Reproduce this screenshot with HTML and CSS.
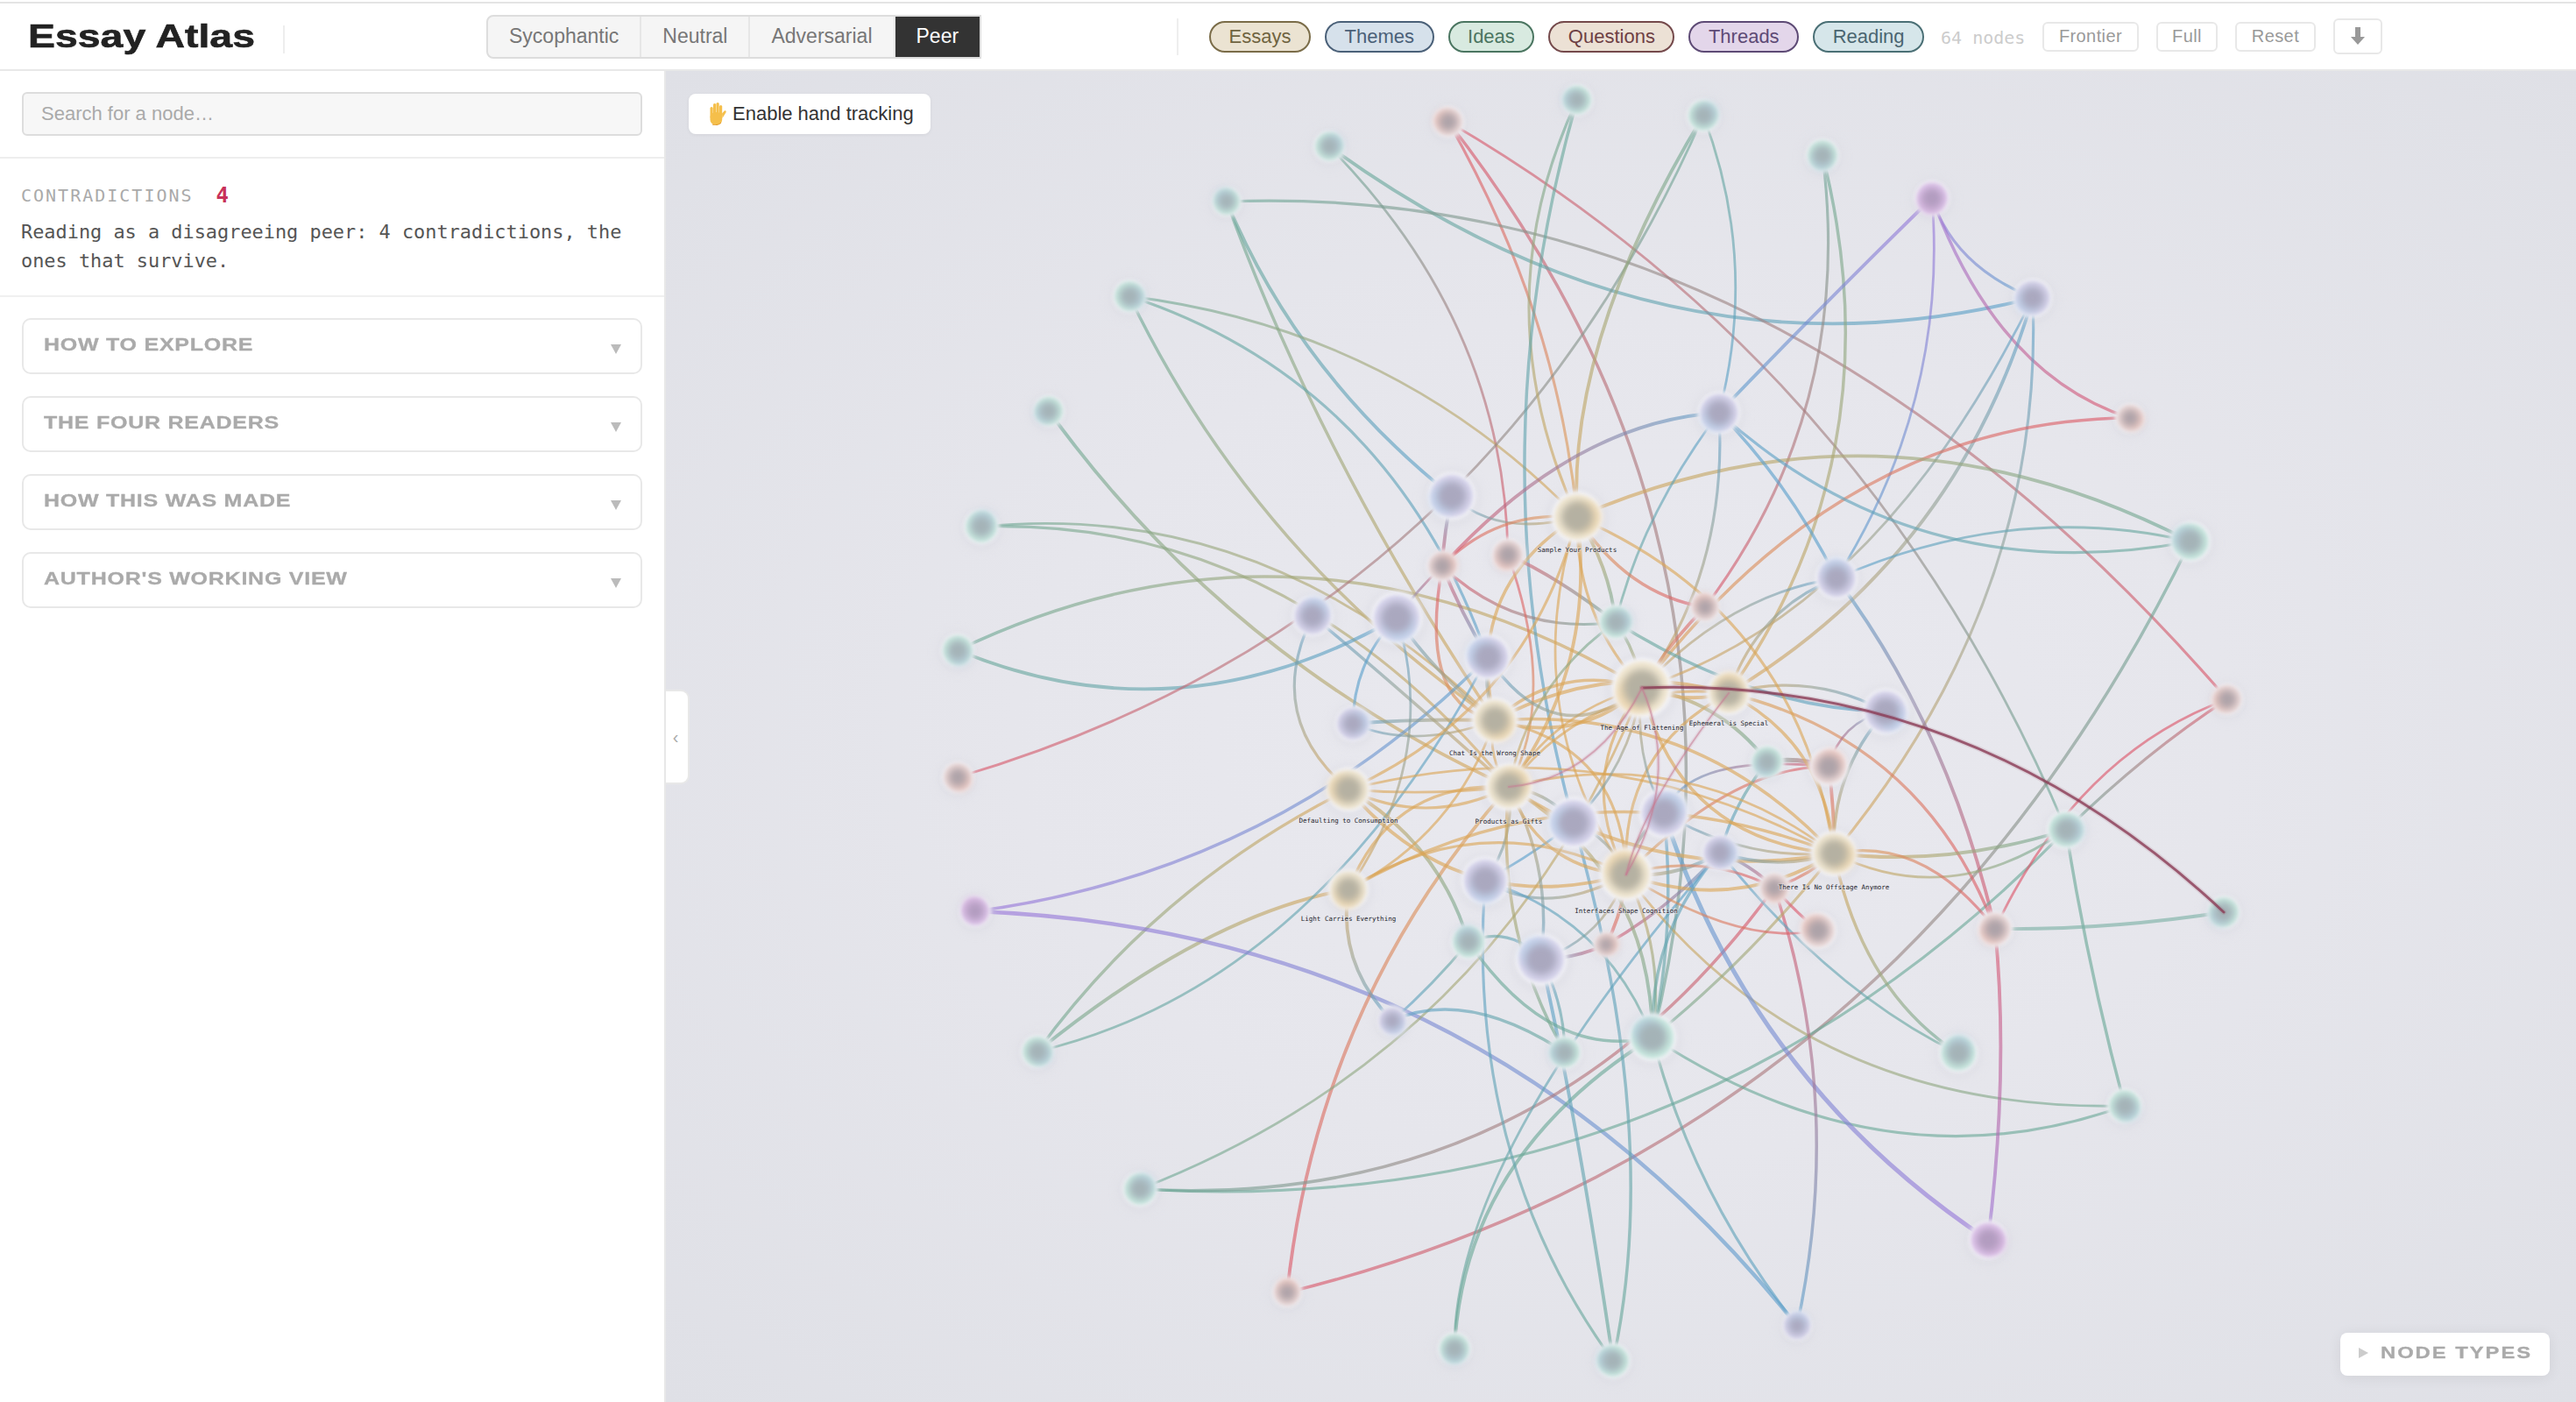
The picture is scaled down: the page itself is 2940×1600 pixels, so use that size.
FILE: index.html
```html
<!DOCTYPE html>
<html lang="en">
<head>
    <meta charset="UTF-8">
    <meta name="viewport" content="width=device-width, initial-scale=1.0">
    <title>Essay Atlas</title>
    <link rel="stylesheet" href="styles.css">
</head>

<body>

<header class="topbar">
    <div class="logo"><span>Essay Atlas</span></div>
    <div class="logo-divider"></div>

    <div class="readers">
        <button class="reader">Sycophantic</button>
        <button class="reader">Neutral</button>
        <button class="reader">Adversarial</button>
        <button class="reader active">Peer</button>
    </div>

    <div class="legend-divider"></div>

    <div class="legend">
        <span class="pill pill-essays">Essays</span>
        <span class="pill pill-themes">Themes</span>
        <span class="pill pill-ideas">Ideas</span>
        <span class="pill pill-questions">Questions</span>
        <span class="pill pill-threads">Threads</span>
        <span class="pill pill-reading">Reading</span>
    </div>

    <span class="node-count">64 nodes</span>

    <div class="tools">
        <button class="tool">Frontier</button>
        <button class="tool">Full</button>
        <button class="tool">Reset</button>
        <button class="tool tool-icon" aria-label="Download">
            <svg width="16" height="20" viewBox="0 0 16 20"><path d="M5 0h6v11h5l-8 9-8-9h5z" fill="#999"/></svg>
        </button>
    </div>
</header>

<div class="layout">
    <aside class="sidebar">
        <div class="search-box">
            <input class="search" type="text" placeholder="Search for a node…">
        </div>

        <div class="summary">
            <div class="summary-head">
                <span class="summary-label">CONTRADICTIONS</span>
                <span class="summary-count">4</span>
            </div>
            <p class="summary-text">Reading as a disagreeing peer: 4 contradictions, the ones that survive.</p>
        </div>

        <div class="panels">
            <div class="panel"><span class="panel-title">How to explore</span><i class="panel-arrow"></i></div>
            <div class="panel"><span class="panel-title">The four readers</span><i class="panel-arrow"></i></div>
            <div class="panel"><span class="panel-title">How this was made</span><i class="panel-arrow"></i></div>
            <div class="panel"><span class="panel-title">Author's working view</span><i class="panel-arrow"></i></div>
        </div>
    </aside>

    <main class="canvas">
        <svg id="graph" class="graph" viewBox="760 81 2180 1519" xmlns="http://www.w3.org/2000/svg"></svg>

        <button class="collapse-tab">‹</button>

        <button class="hand-btn">
            <svg width="24" height="26" viewBox="0 0 24 26">
                <g fill="#f5bf4b">
                    <rect x="5.5" y="5" width="3.2" height="13" rx="1.6"/>
                    <rect x="9" y="1" width="3.2" height="15" rx="1.6"/>
                    <rect x="12.5" y="0" width="3.2" height="15" rx="1.6"/>
                    <rect x="16" y="3" width="3.2" height="13" rx="1.6"/>
                    <rect x="5.5" y="11" width="13.7" height="14.5" rx="6"/>
                    <path d="M19 12.500l2.500-2.800c1.300-1.200 2.900.2 1.900 1.700l-4 6.500z"/>
                </g>
                <path d="M8 25c3 1 7 1 10-2" stroke="#e09a2e" stroke-width="1" fill="none"/>
            </svg>
            Enable hand tracking
        </button>

        <div class="node-types"><i class="node-types-arrow"></i><span class="node-types-title">Node types</span></div>
    </main>
</div>

<script src="graph.js"></script>
</body>
</html>
```

FILE: styles.css
```css
* {
    box-sizing: border-box;
}

html, body {
    margin: 0;
    padding: 0;
    height: 100%;
}

body {
    width: 2940px;
    height: 1600px;
    overflow: hidden;
    padding-top: 2px;
    background-color: white;
    font-family: "Liberation Sans", Arial, sans-serif;
    color: #333;
}

button {
    font-family: inherit;
    cursor: pointer;
}

/* Top bar */
.topbar {
    height: 79px;
    display: flex;
    align-items: center;
    padding-left: 32px;
    border-top: 2px solid #e4e4e4;
    border-bottom: 2px solid #e8e8e8;
}

.logo {
    width: 258px;
    height: 46px;
    margin-top: 1px;
}

.logo span {
    display: inline-block;
    font-size: 37px;
    line-height: 46px;
    font-weight: bold;
    color: #222;
    white-space: nowrap;
    -webkit-text-stroke: 0.6px #222;
    transform: scaleX(1.255);
    transform-origin: left center;
}

.logo-divider {
    width: 2px;
    height: 32px;
    margin-left: 33px;
    margin-top: 6px;
    background-color: #eee;
}

.readers {
    display: flex;
    height: 50px;
    margin-left: 230px;
    border: 2px solid #ddd;
    border-radius: 8px 0 0 8px;
    background-color: #f5f5f5;
    overflow: hidden;
}

.reader {
    padding: 0 24px;
    border: none;
    border-right: 2px solid #e6e6e6;
    background: none;
    font-size: 23px;
    color: #777;
}

.reader.active {
    padding: 0 24px;
    border-right: none;
    background-color: #333;
    color: white;
}

.legend-divider {
    width: 2px;
    height: 42px;
    margin-left: 223px;
    background-color: #eee;
}

.legend {
    display: flex;
    gap: 16px;
    margin-left: 35px;
}

.pill {
    height: 36px;
    padding: 0 20.5px;
    border: 2px solid;
    border-radius: 18px;
    font-size: 22px;
    line-height: 32px;
}

.pill-essays { background-color: #ebe3d2; border-color: #7a6c48; color: #6f6340; }
.pill-themes { background-color: #d6e1eb; border-color: #4a6078; color: #4a6078; }
.pill-ideas { background-color: #d8eae0; border-color: #4a7560; color: #4a7560; }
.pill-questions { background-color: #ece1d5; border-color: #74494b; color: #6e4044; }
.pill-threads { background-color: #e3d6ea; border-color: #5d4a75; color: #5d4a75; }
.pill-reading { background-color: #d6e6ea; border-color: #4a6f75; color: #4a6570; }

.node-count {
    margin-left: 19px;
    margin-top: 3px;
    font-family: "DejaVu Sans Mono", monospace;
    font-size: 20px;
    color: #ccc;
}

.tools {
    display: flex;
    align-items: center;
    gap: 20px;
    margin-left: 20px;
}

.tool {
    height: 34px;
    padding: 0 16.5px;
    border: 2px solid #e8e8e8;
    border-radius: 6px;
    background-color: white;
    font-size: 20px;
    letter-spacing: 0.4px;
    color: #999;
}

.tool-icon {
    width: 56px;
    height: 41px;
    padding: 4px 0 0;
}

/* Sidebar and canvas */
.layout {
    display: flex;
    height: 1519px;
}

.sidebar {
    width: 760px;
    flex-shrink: 0;
    border-right: 2px solid #e8e8e8;
    background-color: white;
}

.search-box {
    height: 100px;
    padding: 24px 25px 0 25px;
    border-bottom: 2px solid #eee;
}

.search {
    display: block;
    width: 708px;
    height: 50px;
    padding: 0 20px;
    border: 2px solid #ddd;
    border-radius: 6px;
    background-color: #f7f7f7;
    font-family: inherit;
    font-size: 22px;
    outline: none;
}

.search::placeholder {
    color: #aaa;
}

.summary {
    height: 158px;
    padding: 28px 24px 0 24px;
    border-bottom: 2px solid #f0f0f0;
    font-family: "DejaVu Sans Mono", monospace;
}

.summary-head {
    display: flex;
    align-items: center;
    gap: 26px;
    height: 28px;
}

.summary-label {
    font-size: 20px;
    letter-spacing: 2px;
    color: #aaa;
}

.summary-count {
    font-size: 24px;
    font-weight: bold;
    color: #c8315a;
}

.summary-text {
    margin: 11px 0 0 0;
    font-size: 21.9px;
    line-height: 33px;
    color: #555;
}

.panels {
    display: flex;
    flex-direction: column;
    gap: 25px;
    padding: 24px 25px;
}

.panel {
    position: relative;
    width: 708px;
    height: 64px;
    padding: 17px 23px 0 23px;
    border: 2px solid #e8e8e8;
    border-radius: 10px;
}

.panel-title {
    display: inline-block;
    font-size: 20px;
    line-height: 23px;
    font-weight: bold;
    letter-spacing: 0.6px;
    text-transform: uppercase;
    white-space: nowrap;
    color: #aaa;
    -webkit-text-stroke: 0.3px #aaa;
    transform: scaleX(1.25);
    transform-origin: left center;
}

.panel-arrow {
    position: absolute;
    right: 22px;
    top: 28px;
    border-left: 6px solid transparent;
    border-right: 6px solid transparent;
    border-top: 11px solid #bbb;
}

.canvas {
    position: relative;
    flex: 1;
    overflow: hidden;
    background: radial-gradient(ellipse at 50% 50%, #e9e9ef 0%, #e6e6ec 45%, #dfe0e6 100%);
}

.graph {
    position: absolute;
    left: 0;
    top: 0;
    width: 2180px;
    height: 1519px;
}

.edge {
    fill: none;
    stroke-opacity: 0.62;
    stroke-linecap: round;
}

.contradiction {
    fill: none;
    stroke-linecap: round;
}

.node-label {
    font-family: "DejaVu Sans Mono", monospace;
    font-size: 7.5px;
    text-anchor: middle;
    fill: #24242c;
    paint-order: stroke;
    stroke: rgba(232, 232, 238, 0.65);
    stroke-width: 1.5px;
}

.collapse-tab {
    position: absolute;
    left: 0;
    top: 706px;
    width: 27px;
    height: 108px;
    padding: 0 3px 0 0;
    border: 2px solid #e8e8e8;
    border-left: none;
    border-radius: 0 10px 10px 0;
    background-color: white;
    font-size: 20px;
    color: #aaa;
}

.hand-btn {
    position: absolute;
    left: 26px;
    top: 26px;
    display: flex;
    align-items: center;
    gap: 7px;
    width: 276px;
    height: 46px;
    padding: 0 0 0 19px;
    border: none;
    border-radius: 8px;
    background-color: white;
    box-shadow: 0 1px 4px rgba(0, 0, 0, 0.06);
    font-size: 22px;
    color: #333;
}

.node-types {
    position: absolute;
    left: 1911px;
    top: 1440px;
    display: flex;
    align-items: center;
    width: 239px;
    height: 49px;
    padding-left: 21px;
    padding-bottom: 4px;
    border-radius: 8px;
    background-color: white;
    box-shadow: 0 2px 16px rgba(0, 0, 0, 0.07);
}

.node-types-arrow {
    border-top: 6px solid transparent;
    border-bottom: 6px solid transparent;
    border-left: 11px solid #ccc;
}

.node-types-title {
    display: inline-block;
    margin-left: 14px;
    font-size: 19px;
    font-weight: bold;
    letter-spacing: 1.6px;
    text-transform: uppercase;
    white-space: nowrap;
    color: #aaa;
    -webkit-text-stroke: 0.3px #aaa;
    transform: scaleX(1.25);
    transform-origin: left center;
}
```

FILE: graph.js
```javascript
// Graph data: id -> [x, y, radius]. First letter of the id is the node type.
const nodes = {
    e1: [1800, 590, 28], e2: [1874, 785, 33], e3: [1973, 791, 24], e4: [1706, 822, 25], e5: [1539, 901, 24],
    e6: [1722, 898, 26], e7: [1539, 1015, 22], e8: [1856, 998, 29], e9: [2093, 974, 25],

    t1: [1657, 566, 26], t2: [1498, 703, 22], t3: [1594, 705, 28], t4: [1698, 750, 25], t5: [1544, 826, 19],
    t6: [1962, 471, 23], t7: [2096, 660, 23], t8: [2152, 812, 25], t9: [1796, 939, 28], t10: [1899, 928, 27],
    t11: [1695, 1005, 26], t12: [1759, 1095, 28], t13: [1963, 973, 20], t14: [2320, 340, 21],
    t15: [2051, 1513, 16], t16: [1589, 1165, 16],

    q1: [1653, 139, 17], q3: [1646, 646, 17], q4: [1721, 633, 18], q5: [1946, 693, 16], q6: [2431, 477, 16],
    q7: [2542, 798, 17], q8: [2087, 875, 21], q9: [2025, 1013, 17], q10: [2075, 1062, 20], q11: [1833, 1078, 14],
    q12: [2277, 1060, 19], q13: [1469, 1475, 16], q14: [1093, 887, 17],

    i1: [1800, 114, 17], i2: [1944, 132, 18], i3: [2080, 177, 18], i4: [1400, 230, 16], i5: [1289, 338, 18],
    i6: [1197, 469, 17], i7: [1120, 601, 19], i8: [1093, 742, 18], i9: [2500, 618, 22], i10: [1844, 710, 19],
    i11: [2017, 869, 18], i12: [1676, 1075, 19], i13: [1184, 1200, 18], i14: [1786, 1201, 18], i15: [1301, 1357, 19],
    i16: [1660, 1539, 18], i17: [1886, 1184, 26], i18: [2358, 947, 21], i19: [2538, 1041, 18], i20: [2235, 1202, 21],
    i21: [2425, 1262, 19], i22: [1841, 1553, 19], i23: [1517, 167, 17],

    p1: [2205, 226, 19], p2: [1113, 1040, 17], p3: [2269, 1415, 21]
};

const labels = {
    e1: ['Sample Your Products', 630], e2: ['The Age of Flattening', 833], e3: ['Ephemeral is Special', 828],
    e4: ['Chat Is the Wrong Shape', 862], e5: ['Defaulting to Consumption', 939], e6: ['Products as Gifts', 940],
    e7: ['Light Carries Everything', 1051], e8: ['Interfaces Shape Cognition', 1042], e9: ['There Is No Offstage Anymore', 1015]
};

const edgeColors = { e: '#dba555', t: '#5a9fcb', q: '#dc5468', i: '#6aa897', p: '#9a74da' };

const nodeColors = {
    e: { rim: '#f4ead4', core: '#b5b1a2', accent: '#efd9b4' },
    t: { rim: '#d8d6ee', core: '#aaa8bf', accent: '#c2d6ee' },
    q: { rim: '#f2dedc', core: '#ada3a9', accent: '#eec8c0' },
    i: { rim: '#c9ebe1', core: '#a4b3b7', accent: '#b8d2df' },
    p: { rim: '#e2c8ee', core: '#b29cc0', accent: '#d8b8e0' }
};

// A few edges stand out from the rest, in weight or in tint.
const heavyEdges = { 'p3-t10': 5, 'p2-t15': 4.4, 'q8-i11': 5 };
const tintedEdges = { 'i19-q12': '#7ab0a4' };

// Edges: [from, to, x, y] run through the point (x, y); [from, to, bend] bulge by a share of their length.
const edges = [
    ['q1', 'i18', 2071, 482], ['q1', 'e1', 1752, 361], ['q1', 'i17', 1898, 640],
    ['i23', 't14', 1910, 350], ['i23', 'q4', 1668, 385],
    ['i4', 'q7', 2000, 360], ['i4', 'e4', 1530, 525], ['i4', 't1', 1505, 412],
    ['i5', 'e1', 1568, 420], ['i5', 't4', 1540, 490], ['i5', 'e4', 1464, 606],
    ['i6', 'e6', 1430, 717],
    ['i7', 'e4', 1430, 640], ['i7', 'e6', 1445, 670],
    ['i8', 'e2', 1484, 659], ['i8', 't3', 1344, 785],
    ['q14', 'i2', 1605, 610],
    ['i1', 'e1', 1745, 350], ['i1', 't9', 1740, 525],
    ['i2', 'e1', 1830, 375], ['i2', 't6', 1980, 300],
    ['i3', 'q5', 2065, 450], ['i3', 'e3', 2096, 500],
    ['p1', 't6', 2085, 345], ['p1', 't7', 2187, 450], ['p1', 't14', 2246, 293], ['p1', 'q6', 2299, 390],
    ['t14', 'e3', 2190, 600], ['t14', 'e2', 2120, 630], ['t14', 'e9', 2270, 670],
    ['q6', 'e2', 2130, 555],
    ['i9', 'e1', 2150, 521], ['i9', 't7', 2298, 605], ['i9', 't6', 2210, 610], ['i9', 'q13', 2075, 1175],
    ['t6', 'q3', 1800, 520], ['t6', 'i10', 1888, 590], ['t6', 'e2', 1945, 640], ['t6', 't7', 2035, 558],
    ['t7', 'q12', 2205, 845], ['t7', 'e2', 1980, 700], ['t7', 'e3', 2020, 710],
    ['i10', 't8', 2000, 785], ['q4', 'i10', 1780, 665], ['t1', 'e1', 1719, 596],
    ['q3', 'e1', 1715, 600], ['q3', 'e4', 1647, 770], ['q3', 't4', 0.02], ['q3', 't3', 0.02], ['q3', 'i10', 0.12],
    ['i13', 'e5', 1342, 1030], ['i13', 'e7', 1370, 1075], ['i13', 't4', 1470, 1050],
    ['p2', 't15', 1636, 1169], ['p2', 't4', 1430, 945],
    ['q13', 'e6', 1550, 1165],
    ['i15', 'e2', 1650, 1134], ['i15', 'i18', 1877, 1273], ['i15', 'q9', 1710, 1284],
    ['i16', 'i17', 1722, 1340], ['i16', 't13', 1735, 1290],
    ['i22', 't11', 1720, 1300], ['i22', 't9', 1858, 1270], ['i22', 't12', 1800, 1300],
    ['i21', 'e8', 2100, 1200], ['i21', 'i17', 2155, 1291], ['i21', 'i18', 2387, 1104],
    ['p3', 'q12', 2283, 1230], ['p3', 't10', 2042, 1204],
    ['t15', 'i17', 1950, 1355], ['t15', 'q9', 2072, 1260],
    ['i19', 'q12', 2407, 1056], ['q12', 'q7', 2390, 895], ['i18', 'q7', 2450, 865],
    ['e3', 'q12', 2160, 885],
    ['e9', 'i18', 2225, 975], ['e9', 'i18', 2225, 1000], ['e9', 'q12', 2190, 985], ['e9', 'i20', 2145, 1110],
    ['e9', 'q8', 2092, 925], ['t13', 'i20', 2095, 1110],
    ['i17', 'e9', 1995, 1085], ['i17', 't10', 0.04], ['e5', 'i12', 1625, 975],
    ['e5', 'e6', 1630, 904], ['e5', 'e6', 1630, 922],
    ['t16', 'i14', 1680, 1155], ['t16', 'e7', 1545, 1095], ['t16', 'i12', 0.02],
    ['i12', 't12', 1720, 1070], ['i12', 'i17', 1775, 1170], ['t12', 'q11', 0.05],
    ['t11', 't9', 0.02], ['t11', 'e8', 1770, 1025],
    ['q11', 't13', 0.04], ['q11', 'e8', 0.05],
    ['q10', 'e8', 1975, 1055], ['q9', 'q10', 0.02], ['q9', 't13', 0.05],
    ['q8', 'i11', 0.06], ['q8', 't10', 1960, 880], ['q8', 'e8', 1975, 905],
    ['i11', 't13', 0.05], ['i11', 'e2', 0.1], ['t8', 'q8', 0.15], ['t8', 'e3', 0.1],
    ['q5', 'e1', 1865, 660], ['q5', 'e2', 0.03], ['q4', 'e6', 1750, 780],

    // the dense middle of the map
    ['e1', 'e2', 0.1], ['e1', 'e4', 0.18], ['e1', 'e6', -0.1], ['e1', 'e8', 0.12], ['e1', 'e9', -0.14],
    ['e2', 'e4', 0.14], ['e2', 'e4', -0.14], ['e2', 'e6', 0.1], ['e2', 'e8', 0.16], ['e2', 'e9', 0.18], ['e2', 'e3', 0.08],
    ['e3', 'e6', 0.14], ['e3', 'e8', 0.16], ['e3', 'e9', -0.14], ['e3', 'e4', 0.1],
    ['e4', 'e6', 0.12], ['e4', 'e8', -0.2], ['e4', 'e9', -0.12],
    ['e5', 'e8', 0.16], ['e5', 'e9', -0.1],
    ['e6', 'e7', 0.18], ['e6', 'e8', 0.16], ['e6', 'e9', 0.1], ['e6', 'e9', -0.12],
    ['e7', 'e8', -0.14], ['e7', 'e9', -0.12], ['e8', 'e9', 0.12],
    ['t9', 'e2', 0.08], ['t9', 'e8', -0.1], ['t9', 'e6', 0.1], ['t10', 'e8', 0.1], ['t10', 'e2', -0.08], ['t10', 'e9', 0.08],
    ['t13', 'e9', 0.08], ['t13', 'e8', -0.08], ['t12', 'e8', 0.12], ['t11', 'e6', 0.1], ['t8', 'e9', 0.1],
    ['t5', 'e4', 1620, 822], ['t5', 'e4', 1620, 840], ['t2', 'e5', 1480, 810], ['t2', 'e6', 1600, 790],
    ['t3', 'e4', 0.04], ['t3', 'e7', 1605, 860], ['t3', 't5', 0.1], ['t4', 'e2', 1780, 815], ['t4', 'e4', 0.06],
    ['e7', 'e4', 0.1], ['e5', 'e1', 0.12], ['i10', 'e2', -0.06], ['i10', 'e1', 0.06], ['i10', 'e6', 0.1],
    ['i17', 'e8', 0.08], ['i17', 't13', -0.1], ['i17', 'e6', 0.14], ['i17', 't11', 0.12],
    ['i14', 't12', 0.06], ['i14', 'e6', -0.08], ['t1', 'q3', 0.02], ['q9', 'e8', 0.1], ['q9', 'e9', 0.05], ['t12', 'e6', 0.08]
];

// Four contradictions drawn over the nodes, running centre to centre.
const contradictions = [
    ['e2', 'i19', 2228, 842, '#8a3a54', 3, 0.8],
    ['e2', 'e8', 1892, 890, '#c67a92', 2, 0.55],
    ['e3', 'e8', 1895, 905, '#c67a92', 2, 0.55],
    ['e2', 'e6', 1810, 865, '#c67a92', 2, 0.55]
];

const svgNS = 'http://www.w3.org/2000/svg';
const graph = document.getElementById('graph');
const defs = make('defs', {}, graph);

function make(tag, attrs, parent) {
    const el = document.createElementNS(svgNS, tag);
    Object.keys(attrs).forEach(key => el.setAttribute(key, attrs[key]));
    if (parent) parent.appendChild(el);
    return el;
}

function addBlur(id, amount) {
    const filter = make('filter', { id: id, x: '-50%', y: '-50%', width: '200%', height: '200%' }, defs);
    make('feGaussianBlur', { stdDeviation: amount }, filter);
}

// Quadratic curve from a to b, passing through the given point or bulging by a share of the length.
function curve(a, b, rest) {
    let cx, cy;
    if (rest.length >= 2) {
        cx = 2 * rest[0] - (a[0] + b[0]) / 2;
        cy = 2 * rest[1] - (a[1] + b[1]) / 2;
    } else {
        cx = (a[0] + b[0]) / 2 - (b[1] - a[1]) * rest[0] * 2;
        cy = (a[1] + b[1]) / 2 + (b[0] - a[0]) * rest[0] * 2;
    }
    return `M${a[0]} ${a[1]}Q${cx} ${cy} ${b[0]} ${b[1]}`;
}

function drawEdges() {
    const layer = make('g', {}, graph);
    edges.forEach((edge, i) => {
        const a = nodes[edge[0]];
        const b = nodes[edge[1]];
        const key = edge[0] + '-' + edge[1];
        const gradient = make('linearGradient', {
            id: 'edge' + i, gradientUnits: 'userSpaceOnUse',
            x1: a[0], y1: a[1], x2: b[0], y2: b[1]
        }, defs);
        make('stop', { offset: '0', 'stop-color': tintedEdges[key] || edgeColors[edge[0][0]] }, gradient);
        make('stop', { offset: '1', 'stop-color': tintedEdges[key] || edgeColors[edge[1][0]] }, gradient);
        make('path', {
            class: 'edge',
            d: curve(a, b, edge.slice(2)),
            stroke: `url(#edge${i})`,
            'stroke-width': heavyEdges[key] || 2.8 + (i % 4) * 0.35
        }, layer);
    });
}

function drawNodes() {
    const layer = make('g', {}, graph);
    Object.keys(nodes).forEach((id, i) => {
        const [x, y, r] = nodes[id];
        const colors = nodeColors[id[0]];
        const angle = i * 2.4;
        make('circle', { cx: x, cy: y + 2, r: r * 1.25, fill: '#d8d8e0', opacity: 0.5, filter: 'url(#blurWide)' }, layer);
        make('circle', { cx: x, cy: y, r: r * 1.06, fill: '#f3f3f7', filter: 'url(#blurEdge)' }, layer);
        make('circle', { cx: x, cy: y, r: r * 0.92, fill: colors.rim, filter: 'url(#blurEdge)' }, layer);
        make('circle', {
            cx: x + Math.cos(angle) * r * 0.32, cy: y + Math.sin(angle) * r * 0.32, r: r * 0.62,
            fill: colors.accent, filter: 'url(#blurSoft)'
        }, layer);
        make('circle', { cx: x, cy: y, r: r * 0.66, fill: colors.core, filter: 'url(#blurCore)' }, layer);
    });
}

function drawContradictions() {
    const layer = make('g', {}, graph);
    contradictions.forEach(c => {
        const d = curve(nodes[c[0]], nodes[c[1]], [c[2], c[3]]);
        make('path', { class: 'contradiction', d: d, stroke: c[4], 'stroke-width': c[5] + 3, opacity: 0.12 }, layer);
        make('path', { class: 'contradiction', d: d, stroke: c[4], 'stroke-width': c[5], opacity: c[6] }, layer);
    });
}

function drawLabels() {
    const layer = make('g', {}, graph);
    Object.keys(labels).forEach(id => {
        const text = make('text', { class: 'node-label', x: nodes[id][0], y: labels[id][1] }, layer);
        text.textContent = labels[id][0];
    });
}

addBlur('blurWide', 6);
addBlur('blurEdge', 2.2);
addBlur('blurSoft', 4.5);
addBlur('blurCore', 5);

drawEdges();
drawNodes();
drawContradictions();
drawLabels();
```
